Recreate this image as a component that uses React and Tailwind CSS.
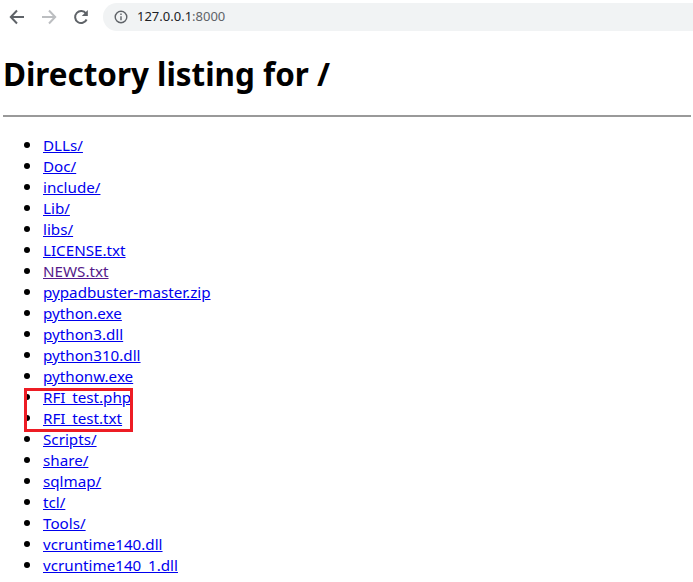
import React from 'react';

const files = [
  'DLLs/', 'Doc/', 'include/', 'Lib/', 'libs/', 'LICENSE.txt', 'NEWS.txt',
  'pypadbuster-master.zip', 'python.exe', 'python3.dll', 'python310.dll', 'pythonw.exe',
  'RFI_test.php', 'RFI_test.txt', 'Scripts/', 'share/', 'sqlmap/', 'tcl/', 'Tools/',
  'vcruntime140.dll', 'vcruntime140_1.dll',
];

const Toolbar = () => (
  <div className="flex items-center h-[34px]">
    <svg className="ml-[9px] w-4 h-4" viewBox="0 0 16 16" fill="none" stroke="#5f6368" strokeWidth="2">
      <path d="M15 8H2M8 1.5L1.8 8 8 14.5" />
    </svg>
    <svg className="ml-[16px] w-4 h-4" viewBox="0 0 16 16" fill="none" stroke="#bcbec1" strokeWidth="2">
      <path d="M1 8h13M8 1.5L14.2 8 8 14.5" />
    </svg>
    <svg className="ml-[16px] w-4 h-4" viewBox="0 0 16 16" fill="none" stroke="#5f6368" strokeWidth="2">
      <path d="M13.6 10.5A6 6 0 1 1 13 4.5" />
      <path d="M14.8 1v6h-6z" fill="#5f6368" stroke="none" />
    </svg>
    <div className="ml-[14px] flex-1 h-[28px] rounded-l-full bg-[#f1f3f4] flex items-center pl-[11px]">
      <svg className="w-[14px] h-[14px]" viewBox="0 0 14 14" fill="none" stroke="#5f6368" strokeWidth="1.4">
        <circle cx="7" cy="7" r="5.8" />
        <path d="M7 6.2v4M7 3.5v1.5" />
      </svg>
      <span className="ml-[9px] text-[13px] text-[#202124]">127.0.0.1<span className="text-[#5f6368]">:8000</span></span>
    </div>
  </div>
);

export default function App() {
  return (
    <div className="relative bg-white h-[582px] overflow-hidden font-['Noto_Sans',sans-serif]">
      <Toolbar />
      <h1 className="mt-[18px] ml-[3px] text-[31.4px] leading-[44px] font-bold text-black">Directory listing for /</h1>
      <hr className="ml-[3px] mr-[2px] mt-[19px] border-t-2 border-[#999]" />
      <ul className="mt-[17px] pl-[43px] list-disc text-[15.2px] leading-[21px] marker:text-[18px]">
        {files.map((name) => (
          <li key={name} className="h-[21px]">
            <a href="#" className={name === 'NEWS.txt' ? 'underline text-[#551a8b]' : 'underline text-[#0000ee]'}>{name}</a>
          </li>
        ))}
      </ul>
      <div className="absolute left-[24px] top-[388px] w-[109px] h-[44px] border-[3px] border-[#ed1c24]" />
    </div>
  );
}
